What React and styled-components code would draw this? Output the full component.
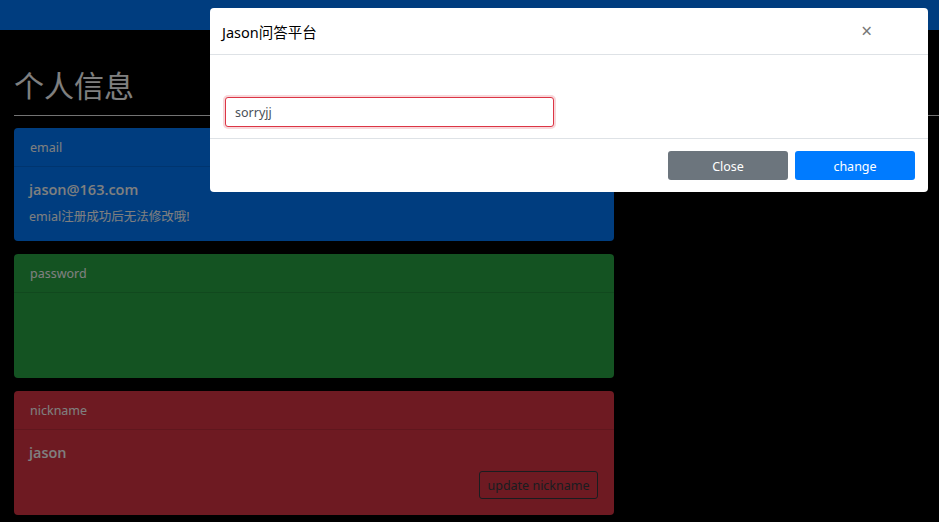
import React from 'react';
import styled, { createGlobalStyle } from 'styled-components';

const GlobalStyle = createGlobalStyle`
  html, body {
    margin: 0;
    background: #000;
    font-family: "Noto Sans", "Open Sans", "Noto Sans CJK SC", sans-serif;
    color: #fff;
  }
`;

const Navbar = styled.div`
  height: 30px;
  background: #007bff;
`;

const Container = styled.div`
  padding: 0 0 0 14px;
`;

const Title = styled.h2`
  margin: 35px 0 0;
  font-size: 30px;
  line-height: 38px;
  font-weight: 400;
  font-family: "Noto Sans CJK SC", sans-serif;
  color: #fff;
`;

const Rule = styled.hr`
  margin: 12px 0 12px;
  border: 0;
  border-top: 1px solid rgba(255, 255, 255, 0.9);
`;

const Card = styled.div`
  width: 600px;
  margin-bottom: 13px;
  border-radius: 4px;
  background: ${p => p.bg};
  color: #fff;
`;

const CardHeader = styled.div`
  height: 38px;
  display: flex;
  align-items: center;
  padding: 0 16px;
  font-size: 12.5px;
  border-bottom: 1px solid rgba(0, 0, 0, 0.125);
`;

const CardBody = styled.div`
  height: ${p => p.h}px;
  padding: 12px 16px 0 15px;
  box-sizing: border-box;
  display: flex;
  flex-direction: column;
`;

const Value = styled.div`
  font-size: 14.5px;
  font-weight: 600;
  line-height: 22px;
  font-family: "Open Sans", "Noto Sans", sans-serif;
`;

const Note = styled.div`
  margin-top: 5px;
  font-size: 12.5px;
  font-family: "Noto Sans", "Noto Sans CJK SC", sans-serif;
`;

const OutlineButton = styled.button`
  align-self: flex-end;
  margin-top: 7px;
  width: 119px;
  height: 28px;
  background: transparent;
  border: 1px solid #343a40;
  border-radius: 3px;
  color: #343a40;
  font-family: inherit;
  font-size: 12.5px;
`;

const Backdrop = styled.div`
  position: fixed;
  inset: 0;
  background: rgba(0, 0, 0, 0.5);
`;

const Modal = styled.div`
  position: fixed;
  top: 8px;
  left: 210px;
  width: 718px;
  background: #fff;
  border-radius: 4px;
  color: #212529;
`;

const ModalHeader = styled.div`
  height: 46px;
  display: flex;
  align-items: center;
  justify-content: space-between;
  padding: 0 56px 0 12px;
  border-bottom: 1px solid #dee2e6;
`;

const ModalTitle = styled.div`
  font-size: 14.5px;
  font-family: "Noto Sans", "Noto Sans CJK SC", sans-serif;
  color: #000;
`;

const CloseX = styled.span`
  font-size: 19px;
  color: #777;
  line-height: 1;
`;

const ModalBody = styled.div`
  padding: 42px 15px 11px;
  border-bottom: 1px solid #dee2e6;
`;

const Input = styled.input`
  box-sizing: border-box;
  width: 329px;
  height: 30px;
  padding: 0 9px;
  border: 1px solid #dc3545;
  border-radius: 3px;
  box-shadow: 0 0 0 2px rgba(220, 53, 69, 0.2);
  font-family: inherit;
  font-size: 12.5px;
  color: #495057;
  outline: none;
`;

const ModalFooter = styled.div`
  height: 53px;
  display: flex;
  align-items: center;
  justify-content: flex-end;
  gap: 7px;
  padding: 0 13px;
`;

const Button = styled.button`
  width: 120px;
  height: 29px;
  padding-top: 2px;
  border: none;
  border-radius: 3px;
  background: ${p => p.bg};
  color: #fff;
  font-family: inherit;
  font-size: 12.5px;
`;

export default function App() {
  return (
    <>
      <GlobalStyle />
      <Navbar />
      <Container>
        <Title>个人信息</Title>
        <Rule />
        <Card bg="#007bff">
          <CardHeader>email</CardHeader>
          <CardBody h={74}>
            <Value>jason@163.com</Value>
            <Note>emial注册成功后无法修改哦!</Note>
          </CardBody>
        </Card>
        <Card bg="#28a745">
          <CardHeader>password</CardHeader>
          <CardBody h={85} />
        </Card>
        <Card bg="#dc3545">
          <CardHeader>nickname</CardHeader>
          <CardBody h={85}>
            <Value>jason</Value>
            <OutlineButton>update nickname</OutlineButton>
          </CardBody>
        </Card>
      </Container>
      <Backdrop />
      <Modal>
        <ModalHeader>
          <ModalTitle>Jason问答平台</ModalTitle>
          <CloseX>×</CloseX>
        </ModalHeader>
        <ModalBody>
          <Input defaultValue="sorryjj" />
        </ModalBody>
        <ModalFooter>
          <Button bg="#6c757d">Close</Button>
          <Button bg="#007bff">change</Button>
        </ModalFooter>
      </Modal>
    </>
  );
}
